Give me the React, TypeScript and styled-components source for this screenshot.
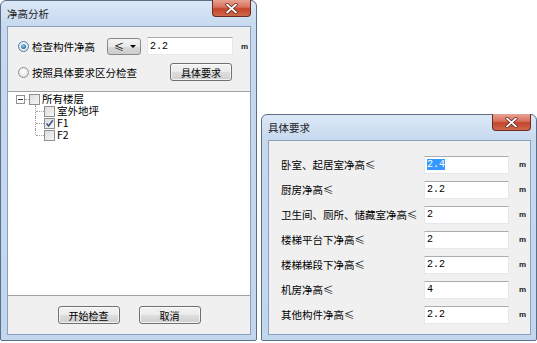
import React from 'react';
import styled, { createGlobalStyle } from 'styled-components';

const GlobalStyle = createGlobalStyle`
  html, body {
    margin: 0;
    padding: 0;
    background: #ffffff;
  }
  body {
    font-family: "Noto Sans CJK SC", "Liberation Sans", sans-serif;
    font-size: 10.5px;
    color: #000;
  }
`;

const Desktop = styled.div`
  width: 537px;
  height: 343px;
  display: flex;
  align-items: flex-start;
  gap: 4px;
  overflow: hidden;
`;

const Window = styled.div<{ $w: number; $h: number; $top?: number }>`
  position: relative;
  box-sizing: border-box;
  width: ${p => p.$w}px;
  height: ${p => p.$h}px;
  margin-top: ${p => p.$top || 0}px;
  border: 1px solid #5d6f86;
  border-radius: 6px 6px 2px 2px;
  background: linear-gradient(#dbe8f6 0px, #c6d9ef 26px, #c2d6ee 100%);
  padding: 0 5px 5px 6px;
  display: flex;
  flex-direction: column;
`;

const TitleBar = styled.div`
  height: 25px;
  flex: none;
  display: flex;
  align-items: center;
  font-size: 10.5px;
  color: #1a1a1a;
`;

const CloseButton = styled.div`
  position: absolute;
  top: -1px;
  right: 5px;
  width: 39px;
  height: 17px;
  box-sizing: border-box;
  border: 1px solid #6d2b22;
  border-top: none;
  border-radius: 0 0 4px 4px;
  background: linear-gradient(#e8a293 0%, #d8715c 45%, #c4442c 55%, #cf6a4c 100%);
  display: flex;
  align-items: center;
  justify-content: center;
`;

const Client = styled.div`
  flex: 1;
  box-sizing: border-box;
  border: 1px solid #8aa1bd;
  background: #f0f0f0;
  display: flex;
  flex-direction: column;
  min-height: 0;
`;

const TopSection = styled.div`
  padding: 8px 0 8px 10px;
  display: flex;
  flex-direction: column;
  gap: 4px;
`;

const Row = styled.div`
  height: 22px;
  display: flex;
  align-items: center;
`;

const Radio = styled.span<{ $checked?: boolean }>`
  width: 11px;
  height: 11px;
  box-sizing: border-box;
  border-radius: 50%;
  border: 1px solid ${p => (p.$checked ? '#4b7bab' : '#8e8f8f')};
  background: radial-gradient(circle at 50% 40%, #ffffff 0%, #dadada 100%);
  display: flex;
  align-items: center;
  justify-content: center;
  flex: none;

  &::after {
    content: '';
    display: ${p => (p.$checked ? 'block' : 'none')};
    width: 5px;
    height: 5px;
    border-radius: 50%;
    background: radial-gradient(circle at 40% 35%, #8fd0f7 0%, #1d5e9a 80%);
  }
`;

const RadioLabel = styled.span<{ $w: number }>`
  width: ${p => p.$w}px;
  padding-left: 3px;
  white-space: nowrap;
  flex: none;
`;

const Combo = styled.div`
  width: 34px;
  height: 17px;
  box-sizing: border-box;
  border: 1px solid #8a8a8a;
  border-radius: 3px;
  background: linear-gradient(#f3f3f3 0%, #e9e9e9 50%, #d9d9d9 51%, #cdcdcd 100%);
  display: flex;
  align-items: center;
  justify-content: space-between;
  padding: 0 4px 0 6px;
  font-size: 10px;
  flex: none;
`;

const Arrow = styled.span`
  width: 0;
  height: 0;
  border-left: 3px solid transparent;
  border-right: 3px solid transparent;
  border-top: 3px solid #000;
`;

const TextInput = styled.div<{ $w: number; $ml?: number }>`
  width: ${p => p.$w}px;
  height: 18px;
  margin-left: ${p => p.$ml || 0}px;
  box-sizing: border-box;
  border: 1px solid #e3e9ef;
  border-top-color: #abadb3;
  background: #fff;
  display: flex;
  align-items: center;
  padding-left: 2px;
  font-family: "Liberation Mono", "DejaVu Sans Mono", monospace;
  font-size: 10px;
  flex: none;
`;

const Selected = styled.span`
  background: #3399ff;
  color: #fff;
`;

const Unit = styled.span<{ $ml: number }>`
  margin-left: ${p => p.$ml}px;
  font-size: 8px;
  font-family: "Liberation Sans", sans-serif;
  font-weight: bold;
  color: #222;
`;

const Button = styled.div<{ $ml?: number }>`
  width: 62px;
  height: 18px;
  margin-left: ${p => p.$ml || 0}px;
  box-sizing: border-box;
  border: 1px solid #707070;
  border-radius: 3px;
  background: linear-gradient(#f2f2f2 0%, #ebebeb 50%, #dddddd 51%, #cfcfcf 100%);
  box-shadow: inset 0 0 0 1px rgba(255, 255, 255, 0.7);
  display: flex;
  align-items: center;
  justify-content: center;
  font-size: 10px;
  flex: none;
`;

const Tree = styled.div`
  flex: 1;
  background: #fff;
  border-top: 1px solid #a0a0a0;
  border-bottom: 1px solid #a0a0a0;
  padding-top: 1px;
  font-size: 10.5px;
`;

const TreeRow = styled.div<{ $indent: number }>`
  height: 12px;
  line-height: 12px;
  display: flex;
  align-items: center;
  padding-left: ${p => p.$indent}px;
  white-space: nowrap;
`;

const Expander = styled.span`
  width: 9px;
  height: 9px;
  box-sizing: border-box;
  border: 1px solid #919191;
  background: #fff;
  display: flex;
  align-items: center;
  justify-content: center;
  flex: none;

  &::after {
    content: '';
    width: 5px;
    height: 1px;
    background: #333;
  }
`;

const HLine = styled.span<{ $w: number }>`
  width: ${p => p.$w}px;
  border-top: 1px dotted #a0a0a0;
  flex: none;
`;

const Branch = styled.span<{ $last?: boolean }>`
  position: relative;
  width: 9px;
  height: 12px;
  flex: none;

  &::before {
    content: '';
    position: absolute;
    left: 0;
    top: 0;
    height: ${p => (p.$last ? '6px' : '12px')};
    border-left: 1px dotted #a0a0a0;
  }
  &::after {
    content: '';
    position: absolute;
    left: 1px;
    top: 6px;
    width: 8px;
    border-top: 1px dotted #a0a0a0;
  }
`;

const CheckBox = styled.span`
  width: 11px;
  height: 11px;
  box-sizing: border-box;
  border: 1px solid #8f8f8f;
  background: linear-gradient(135deg, #dcdcdc 0%, #f7f7f7 100%);
  display: flex;
  align-items: center;
  justify-content: center;
  flex: none;
  margin-right: 1px;
`;

const TreeLabel = styled.span`
  padding-left: 1px;
  line-height: 12px;
`;

const BottomBar = styled.div`
  height: 38px;
  display: flex;
  align-items: center;
  justify-content: center;
  gap: 19px;
  flex: none;
`;

const ReqBody = styled.div`
  padding: 11px 0 0 12px;
  display: flex;
  flex-direction: column;
`;

const ReqRow = styled.div`
  height: 25px;
  display: flex;
  align-items: center;
`;

const ReqLabel = styled.span`
  width: 143px;
  white-space: nowrap;
  flex: none;
`;

const CloseGlyph = () => (
  <CloseButton>
    <svg width="13" height="11" viewBox="0 0 13 11">
      <path d="M2 1.5 L11 9.5 M11 1.5 L2 9.5" stroke="#5a2018" strokeWidth="3.2" strokeLinecap="round" />
      <path d="M2 1.5 L11 9.5 M11 1.5 L2 9.5" stroke="#ffffff" strokeWidth="1.8" strokeLinecap="round" />
    </svg>
  </CloseButton>
);

const Check = () => (
  <svg width="9" height="9" viewBox="0 0 9 9">
    <path d="M1.5 4.5 L3.6 7 L7.8 1.2" stroke="#3d5a8c" strokeWidth="1.6" fill="none" />
  </svg>
);

const requirements = [
  { label: '卧室、起居室净高≤', value: '2.4', selected: true },
  { label: '厨房净高≤', value: '2.2' },
  { label: '卫生间、厕所、储藏室净高≤', value: '2' },
  { label: '楼梯平台下净高≤', value: '2' },
  { label: '楼梯梯段下净高≤', value: '2.2' },
  { label: '机房净高≤', value: '4' },
  { label: '其他构件净高≤', value: '2.2' },
];

const floors = [
  { name: '室外地坪', checked: false },
  { name: 'F1', checked: true },
  { name: 'F2', checked: false },
];

export default function App() {
  return (
    <>
      <GlobalStyle />
      <Desktop>
        <Window $w={257} $h={341}>
          <TitleBar>净高分析</TitleBar>
          <CloseGlyph />
          <Client>
            <TopSection>
              <Row>
                <Radio $checked />
                <RadioLabel $w={75}>检查构件净高</RadioLabel>
                <Combo>
                  <span>≤</span>
                  <Arrow />
                </Combo>
                <TextInput $w={86} $ml={6}>2.2</TextInput>
                <Unit $ml={8}>m</Unit>
              </Row>
              <Row>
                <Radio />
                <RadioLabel $w={138}>按照具体要求区分检查</RadioLabel>
                <Button>具体要求</Button>
              </Row>
            </TopSection>
            <Tree>
              <TreeRow $indent={8}>
                <Expander />
                <HLine $w={4} />
                <CheckBox />
                <TreeLabel>所有楼层</TreeLabel>
              </TreeRow>
              {floors.map((f, i) => (
                <TreeRow key={f.name} $indent={27}>
                  <Branch $last={i === floors.length - 1} />
                  <CheckBox>{f.checked && <Check />}</CheckBox>
                  <TreeLabel>{f.name}</TreeLabel>
                </TreeRow>
              ))}
            </Tree>
            <BottomBar>
              <Button>开始检查</Button>
              <Button>取消</Button>
            </BottomBar>
          </Client>
        </Window>

        <Window $w={276} $h={227} $top={114}>
          <TitleBar>具体要求</TitleBar>
          <CloseGlyph />
          <Client>
            <ReqBody>
              {requirements.map(r => (
                <ReqRow key={r.label}>
                  <ReqLabel>{r.label}</ReqLabel>
                  <TextInput $w={85}>
                    {r.selected ? <Selected>{r.value}</Selected> : r.value}
                  </TextInput>
                  <Unit $ml={10}>m</Unit>
                </ReqRow>
              ))}
            </ReqBody>
          </Client>
        </Window>
      </Desktop>
    </>
  );
}
